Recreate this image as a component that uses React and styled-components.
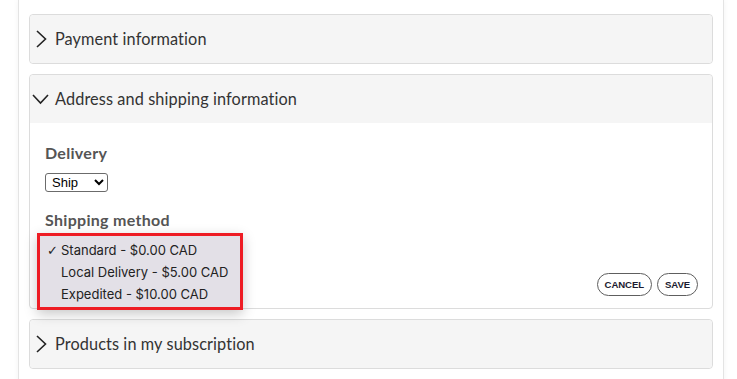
import React from "react";
import styled, { createGlobalStyle } from "styled-components";

const Global = createGlobalStyle`
  html, body { margin: 0; padding: 0; background: #fff; }
  body { font-family: Lato, "Noto Sans", sans-serif; color: #333; overflow: hidden; }
`;

const Page = styled.div`
  margin-left: 18px;
  width: 706px;
  min-height: 100vh;
  box-sizing: border-box;
  padding: 14px 10px;
  border-left: 1px solid #e4e4e4;
  border-right: 1px solid #e4e4e4;
  box-shadow: 0 0 6px rgba(0, 0, 0, 0.05);
  display: flex;
  flex-direction: column;
  gap: 10px;
`;

const Panel = styled.section`
  border: 1px solid #dcdcdc;
  border-radius: 4px;
  background: #fff;
  overflow: visible;
`;

const Header = styled.div`
  height: 48px;
  display: flex;
  align-items: center;
  gap: 5px;
  padding-left: 2px;
  background: #f5f5f5;
  border-radius: ${(p) => (p.$open ? "4px 4px 0 0" : "4px")};
  font-size: 16.3px;
  line-height: 20px;
  padding-bottom: 1px;
  box-sizing: border-box;
  color: #333;
  letter-spacing: 0.1px;
`;

const Icon = styled.svg`
  width: 18px;
  height: 18px;
  flex: none;
`;

const Body = styled.div`
  padding: 20px 14px 12px 15px;
  display: flex;
  flex-direction: column;
  align-items: flex-start;
`;

const Label = styled.div`
  font-weight: 700;
  font-size: 16px;
  line-height: 20px;
  color: #555;
  letter-spacing: 0.3px;
  margin-bottom: 10px;
`;

const Select = styled.select`
  display: block;
  box-sizing: border-box;
  width: ${(p) => p.$w}px;
  height: 19px;
  font-family: "Liberation Sans", Arial, sans-serif;
  font-size: 13px;
  color: #000;
  padding: 0 0 0 2px;
  border: 1px solid #6b6b6b;
  border-radius: 3px;
  background: #fff;
  margin-bottom: 18px;
`;

const SelectWrap = styled.div`
  position: relative;
  align-self: stretch;
  height: 19px;
  margin-bottom: 14px;
`;

const Popup = styled.ul`
  position: absolute;
  left: -8px;
  top: -7px;
  width: 206px;
  box-sizing: border-box;
  margin: 0;
  padding: 3px 0 2px;
  list-style: none;
  border: 3px solid #ee1c24;
  background: #e3e0e7;
  box-shadow: 0 4px 12px rgba(0, 0, 0, 0.22);
  font-family: Inter, "Noto Sans", sans-serif;
  font-size: 13px;
  color: #222;
  z-index: 2;
`;

const Item = styled.li`
  height: 22px;
  display: flex;
  align-items: center;
  padding-left: 21px;
  position: relative;
`;

const Check = styled.span`
  position: absolute;
  left: 7px;
  font-family: "DejaVu Sans", sans-serif;
  font-size: 13px;
  font-weight: 700;
`;

const Actions = styled.div`
  align-self: stretch;
  display: flex;
  justify-content: flex-end;
  gap: 5px;
`;

const Pill = styled.button`
  height: 23px;
  padding: 0 7px;
  border: 1px solid #5e5e5e;
  border-radius: 12px;
  background: #fff;
  font-family: "Liberation Sans", Arial, sans-serif;
  font-weight: 700;
  font-size: 9.6px;
  color: #1b1b30;
  letter-spacing: -0.1px;
`;

const Right = () => (
  <Icon viewBox="0 0 18 18">
    <path d="M5 1 L13.5 9 L5 17" fill="none" stroke="#222" strokeWidth="1.6" />
  </Icon>
);

const Down = () => (
  <Icon viewBox="0 0 18 18">
    <path d="M1 5 L8.5 13 L16 5" fill="none" stroke="#222" strokeWidth="1.6" />
  </Icon>
);

export default function App() {
  return (
    <>
      <Global />
      <Page>
        <Panel>
          <Header>
            <Right />
            Payment information
          </Header>
        </Panel>
        <Panel>
          <Header $open>
            <Down />
            Address and shipping information
          </Header>
          <Body>
            <Label>Delivery</Label>
            <Select $w={63} defaultValue="ship">
              <option value="ship">Ship</option>
              <option value="pickup">Pickup</option>
            </Select>
            <Label>Shipping method</Label>
            <SelectWrap>
              <Popup>
                <Item>
                  <Check>✓</Check>Standard - $0.00 CAD
                </Item>
                <Item>Local Delivery - $5.00 CAD</Item>
                <Item>Expedited - $10.00 CAD</Item>
              </Popup>
            </SelectWrap>
            <Actions>
              <Pill>CANCEL</Pill>
              <Pill>SAVE</Pill>
            </Actions>
          </Body>
        </Panel>
        <Panel>
          <Header>
            <Right />
            Products in my subscription
          </Header>
        </Panel>
      </Page>
    </>
  );
}
